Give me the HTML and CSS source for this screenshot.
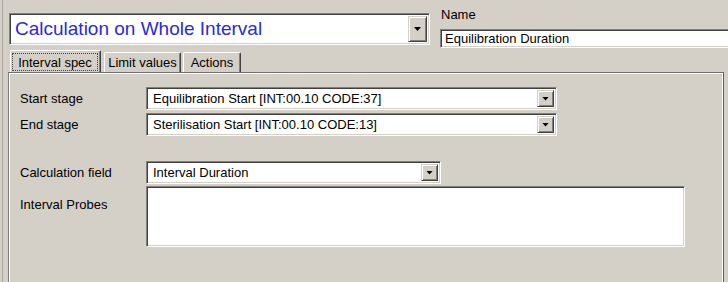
FILE: index.html
```html
<!DOCTYPE html>
<html>
<head>
<meta charset="utf-8">
<link rel="stylesheet" href="styles.css">
</head>
<body>
<div class="window">
  <div class="top">
    <div class="combo big sunken">
      <div class="value">Calculation on Whole Interval</div>
      <div class="drop"><span class="tri"></span></div>
    </div>
    <div class="name-group">
      <div class="name-label">Name</div>
      <div class="name-input sunken">Equilibration Duration</div>
    </div>
  </div>
  <div class="tabs">
    <div class="tab active"><span class="focus">Interval spec</span></div>
    <div class="tab limit">Limit values</div>
    <div class="tab actions">Actions</div>
  </div>
  <div class="panel">
    <div class="row first">
      <div class="label">Start stage</div>
      <div class="combo wide sunken">
        <div class="value">Equilibration Start [INT:00.10 CODE:37]</div>
        <div class="drop"><span class="tri"></span></div>
      </div>
    </div>
    <div class="row second">
      <div class="label">End stage</div>
      <div class="combo wide sunken">
        <div class="value">Sterilisation Start [INT:00.10 CODE:13]</div>
        <div class="drop"><span class="tri"></span></div>
      </div>
    </div>
    <div class="row third">
      <div class="label">Calculation field</div>
      <div class="combo medium sunken">
        <div class="value">Interval Duration</div>
        <div class="drop"><span class="tri"></span></div>
      </div>
    </div>
    <div class="row fourth">
      <div class="label top-label">Interval Probes</div>
      <div class="textbox sunken"></div>
    </div>
  </div>
</div>
</body>
</html>
```
FILE: styles.css
```css
* { box-sizing: border-box; }
body {
  margin: 0;
  background: #d4d0c8;
  font-family: "Liberation Sans", Arial, sans-serif;
  font-size: 13px;
  color: #000;
  width: 728px;
  height: 282px;
  overflow: hidden;
}
.window {
  margin-left: 2px;
  border-left: 1px solid #aaa69e;
  height: 282px;
}
.top {
  display: flex;
  height: 50px;
}
.sunken {
  background: #fff;
  border: 1px solid;
  border-color: #808080 #fff #fff #808080;
  box-shadow: inset 1px 1px #404040, inset -1px -1px #d4d0c8;
}
.combo {
  display: flex;
  align-items: stretch;
  padding: 2px;
}
.combo .value {
  flex: 1;
  padding-left: 4px;
  display: flex;
  align-items: center;
  white-space: nowrap;
  overflow: hidden;
}
.drop {
  width: 17px;
  background: #d4d0c8;
  border: 1px solid;
  border-color: #d4d0c8 #404040 #404040 #d4d0c8;
  box-shadow: inset 1px 1px #fff, inset -1px -1px #808080;
  display: flex;
  align-items: center;
  justify-content: center;
}
.tri {
  width: 7px;
  height: 4px;
  background: #000;
  clip-path: polygon(0 0, 100% 0, 50% 100%);
}
.big {
  flex: none;
  margin: 13px 0 0 6px;
  width: 421px;
  height: 32px;
}
.big .value {
  font-size: 19px;
  color: #2a2ad8;
  padding-left: 3px;
}
.big .drop { width: 19px; }
.name-group {
  flex: none;
  margin-left: 10px;
  padding-top: 7px;
}
.name-label {
  height: 15px;
  line-height: 15px;
  padding-left: 1px;
}
.name-input {
  margin-top: 7px;
  width: 300px;
  height: 19px;
  line-height: 17px;
  padding-left: 4px;
  white-space: nowrap;
}
.tabs {
  display: flex;
  align-items: flex-end;
  height: 22px;
  padding-left: 7px;
}
.tab {
  height: 20px;
  display: flex;
  align-items: center;
  justify-content: center;
  border-top: 1px solid #fff;
  border-left: 1px solid #fff;
  border-right: 1px solid #404040;
  box-shadow: inset -1px 0 #808080;
  border-radius: 2px 2px 0 0;
}
.tab.active {
  height: 22px;
  width: 91px;
  margin-right: 3px;
  padding: 2px 2px 1px 1px;
}
.focus {
  flex: 1;
  align-self: stretch;
  display: flex;
  align-items: center;
  justify-content: center;
  border: 1px dotted #444;
}
.tab.limit { width: 77px; margin-right: 2px; }
.tab.actions { width: 58px; }
.panel {
  margin-left: 5px;
  width: 716px;
  height: 210px;
  border-top: 1px solid #707070;
  border-left: 1px solid #808080;
  border-right: 1px solid #606060;
  box-shadow: inset 1px 1px #fff, inset -1px 0 #fff;
  padding: 14px 0 0 11px;
}
.row {
  display: flex;
  align-items: center;
}
.label {
  width: 126px;
  flex: none;
}
.row.first { height: 23px; }
.row.second { height: 23px; margin-top: 3px; }
.row.third { height: 23px; margin-top: 25px; }
.row.fourth { margin-top: 2px; align-items: flex-start; }
.wide { width: 411px; height: 23px; }
.medium { width: 295px; height: 23px; }
.top-label { padding-top: 11px; }
.textbox {
  width: 539px;
  height: 61px;
}
```
